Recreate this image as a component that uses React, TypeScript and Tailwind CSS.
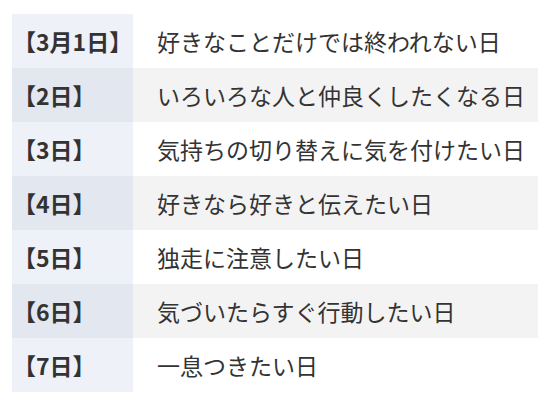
const rows = [
  { day: "【3月1日】", text: "好きなことだけでは終われない日" },
  { day: "【2日】", text: "いろいろな人と仲良くしたくなる日" },
  { day: "【3日】", text: "気持ちの切り替えに気を付けたい日" },
  { day: "【4日】", text: "好きなら好きと伝えたい日" },
  { day: "【5日】", text: "独走に注意したい日" },
  { day: "【6日】", text: "気づいたらすぐ行動したい日" },
  { day: "【7日】", text: "一息つきたい日" },
];

export default function App() {
  return (
    <div
      className="w-[558px] h-[407px] bg-white pt-[14px] pl-[12px]"
      style={{ fontFamily: '"Noto Sans CJK JP", "Noto Sans", sans-serif' }}
    >
      <table className="w-[526px] border-collapse text-[#333]">
        <tbody>
          {rows.map((row, i) => (
            <tr key={row.day} className={i % 2 === 1 ? "bg-[#f3f3f3]" : "bg-white"}>
              <th
                className={`w-[121px] h-[54px] pl-[1px] text-left align-middle font-bold text-[23px] leading-none whitespace-nowrap ${
                  i % 2 === 1 ? "bg-[#e3e7ef]" : "bg-[#eef1f8]"
                }`}
              >
                {row.day}
              </th>
              <td className="h-[54px] pl-[24px] align-middle text-[23px] leading-none whitespace-nowrap">
                {row.text}
              </td>
            </tr>
          ))}
        </tbody>
      </table>
    </div>
  );
}
